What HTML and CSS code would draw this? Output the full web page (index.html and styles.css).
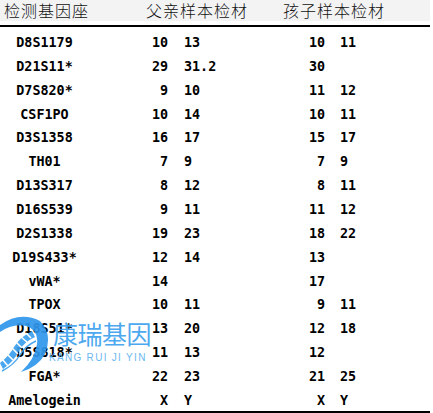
FILE: index.html
```html
<!DOCTYPE html>
<html lang="zh">
<head>
<meta charset="utf-8">
<title>STR</title>
<link rel="stylesheet" href="styles.css">
</head>
<body>
<div class="sheet">
  <div class="head">
    <span>检测基因座</span>
    <span>父亲样本检材</span>
    <span>孩子样本检材</span>
  </div>
  <div class="rows">
    <div class="row"><span class="loc">D8S1179</span><span class="a1">10</span><span class="a2">13</span><span class="a1">10</span><span class="a2">11</span></div>
    <div class="row"><span class="loc">D21S11*</span><span class="a1">29</span><span class="a2">31.2</span><span class="a1">30</span><span class="a2"></span></div>
    <div class="row"><span class="loc">D7S820*</span><span class="a1">9</span><span class="a2">10</span><span class="a1">11</span><span class="a2">12</span></div>
    <div class="row"><span class="loc">CSF1PO</span><span class="a1">10</span><span class="a2">14</span><span class="a1">10</span><span class="a2">11</span></div>
    <div class="row"><span class="loc">D3S1358</span><span class="a1">16</span><span class="a2">17</span><span class="a1">15</span><span class="a2">17</span></div>
    <div class="row"><span class="loc">TH01</span><span class="a1">7</span><span class="a2">9</span><span class="a1">7</span><span class="a2">9</span></div>
    <div class="row"><span class="loc">D13S317</span><span class="a1">8</span><span class="a2">12</span><span class="a1">8</span><span class="a2">11</span></div>
    <div class="row"><span class="loc">D16S539</span><span class="a1">9</span><span class="a2">11</span><span class="a1">11</span><span class="a2">12</span></div>
    <div class="row"><span class="loc">D2S1338</span><span class="a1">19</span><span class="a2">23</span><span class="a1">18</span><span class="a2">22</span></div>
    <div class="row"><span class="loc">D19S433*</span><span class="a1">12</span><span class="a2">14</span><span class="a1">13</span><span class="a2"></span></div>
    <div class="row"><span class="loc">vWA*</span><span class="a1">14</span><span class="a2"></span><span class="a1">17</span><span class="a2"></span></div>
    <div class="row"><span class="loc">TPOX</span><span class="a1">10</span><span class="a2">11</span><span class="a1">9</span><span class="a2">11</span></div>
    <div class="row"><span class="loc">D18S51*</span><span class="a1">13</span><span class="a2">20</span><span class="a1">12</span><span class="a2">18</span></div>
    <div class="row"><span class="loc">D5S818*</span><span class="a1">11</span><span class="a2">13</span><span class="a1">12</span><span class="a2"></span></div>
    <div class="row"><span class="loc">FGA*</span><span class="a1">22</span><span class="a2">23</span><span class="a1">21</span><span class="a2">25</span></div>
    <div class="row"><span class="loc">Amelogein</span><span class="a1">X</span><span class="a2">Y</span><span class="a1">X</span><span class="a2">Y</span></div>
  </div>
  <div class="mark">
    <svg class="mark-icon" width="52" height="62" viewBox="0 0 52 62">
      <path d="M0,14 Q20,0 40,10 Q53,23 45,43 Q38,56 21,61 Q35,48 37,33 Q39,19 26,15 Q13,12 0,21 Z" fill="#2f97ec"/>
      <path d="M0,52 Q10,44 14,36 Q20,26 32,20 L35,26 Q24,31 19,40 Q14,50 3,58 Z" fill="#3a9fee"/>
      <g stroke="#ffffff" stroke-width="1.6">
        <line x1="2" y1="48" x2="8" y2="55"/>
        <line x1="7" y1="43" x2="13" y2="49"/>
        <line x1="12" y1="37" x2="18" y2="43"/>
        <line x1="16" y1="31" x2="22" y2="37"/>
        <line x1="21" y1="26" x2="27" y2="31"/>
        <line x1="26" y1="22" x2="31" y2="27"/>
      </g>
      <path d="M2,60 Q14,54 20,44 Q25,35 36,30" fill="none" stroke="#3a9fee" stroke-width="1.4"/>
    </svg>
    <div class="mark-cn">康瑞基因</div>
    <div class="mark-en">KANG RUI JI YIN</div>
  </div>
</div>
</body>
</html>
```
FILE: styles.css
```css
html, body {
  margin: 0;
  padding: 0;
  background: #ffffff;
}
.sheet {
  position: relative;
  width: 430px;
  height: 413px;
}
.head {
  display: grid;
  grid-template-columns: 142px 137px 1fr;
  align-items: center;
  height: 21px;
  padding-left: 4px;
  background: #f3f3f3;
  font-family: "Noto Sans CJK SC", sans-serif;
  font-size: 16px;
  letter-spacing: 1px;
  font-weight: 300;
  line-height: 19px;
  color: #111;
  margin-bottom: 4px;
}
.rows {
  border-top: 2px solid #000;
  border-bottom: 2px solid #000;
  padding-bottom: 2px;
}
.row {
  display: grid;
  grid-template-columns: 89px 79px 82px 75px 1fr;
  height: 23.87px;
  box-sizing: border-box;
  padding-top: 9px;
  font-family: "DejaVu Sans Mono", monospace;
  font-weight: bold;
  font-size: 13.4px;
  line-height: 14px;
  color: #000;
  white-space: pre;
}
.loc {
  text-align: center;
}
.a1 {
  text-align: right;
}
.a2 {
  text-align: left;
  padding-left: 16px;
}
.row .a2:last-child {
  padding-left: 15px;
}
.mark {
  position: absolute;
  left: 0;
  top: 311px;
  width: 160px;
  height: 62px;
  opacity: 0.92;
}
.mark-icon {
  position: absolute;
  left: 0;
  top: 0;
}
.mark-cn {
  position: absolute;
  left: 53px;
  top: 6px;
  font-family: "Noto Sans CJK SC", sans-serif;
  font-size: 25px;
  line-height: 32px;
  letter-spacing: -0.5px;
  color: #3da2ee;
}
.mark-en {
  position: absolute;
  left: 49px;
  top: 42px;
  font-family: "Liberation Sans", sans-serif;
  font-size: 10px;
  line-height: 10px;
  letter-spacing: 1.3px;
  color: #5fb3f0;
}
```
